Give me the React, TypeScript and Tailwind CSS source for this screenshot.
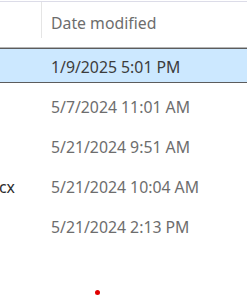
import React from 'react';

interface FileRow {
    name: string;
    modified: string;
    selected?: boolean;
}

const rows: FileRow[] = [
    { name: '', modified: '1/9/2025 5:01 PM', selected: true },
    { name: '', modified: '5/7/2024 11:01 AM' },
    { name: '', modified: '5/21/2024 9:51 AM' },
    { name: 'cx', modified: '5/21/2024 10:04 AM' },
    { name: '', modified: '5/21/2024 2:13 PM' },
];

export default function App() {
    return (
        <div
            className="relative h-[296px] w-[247px] overflow-hidden bg-white"
            style={{ fontFamily: '"Noto Sans", "Open Sans", sans-serif' }}
        >
            {/* top edge of the details pane */}
            <div className="mt-px h-px bg-[#dcdce8]" />

            {/* column header */}
            <div className="flex h-[46px]">
                <div className="h-[36px] w-[42px] border-r border-[#e5e5e5]" />
                <div className="pl-[9px] pt-[11px] text-[15.8px] leading-[20px] text-[#6d6d6d]">Date modified</div>
            </div>

            {/* rows */}
            <div className="flex flex-col">
                {rows.map((row, i) => (
                    <div
                        key={i}
                        className={
                            row.selected
                                ? 'flex h-[35px] items-center border-y border-[#5c5c5c] bg-[#cce8ff] pt-[2px] shadow-[0_-1px_0_#b4b4b4]'
                                : 'flex h-[40px] items-center pt-[8px]'
                        }
                    >
                        <div className="flex w-[42px] justify-start overflow-hidden">
                            {row.name && (
                                <div className="-ml-px text-[15.8px] leading-[20px] text-[#2b2b2b]">{row.name}</div>
                            )}
                        </div>
                        <div
                            className={
                                row.selected
                                    ? 'pl-[9px] text-[15.8px] leading-[20px] text-[#3c3c3c]'
                                    : 'pl-[9px] text-[15.8px] leading-[20px] text-[#6d6d6d]'
                            }
                        >
                            {row.modified}
                        </div>
                    </div>
                ))}
            </div>

            {/* red dot marker */}
            <div className="absolute left-[95px] top-[290px] h-[5px] w-[5px] rounded-full bg-[#e00000]" />
        </div>
    );
}
